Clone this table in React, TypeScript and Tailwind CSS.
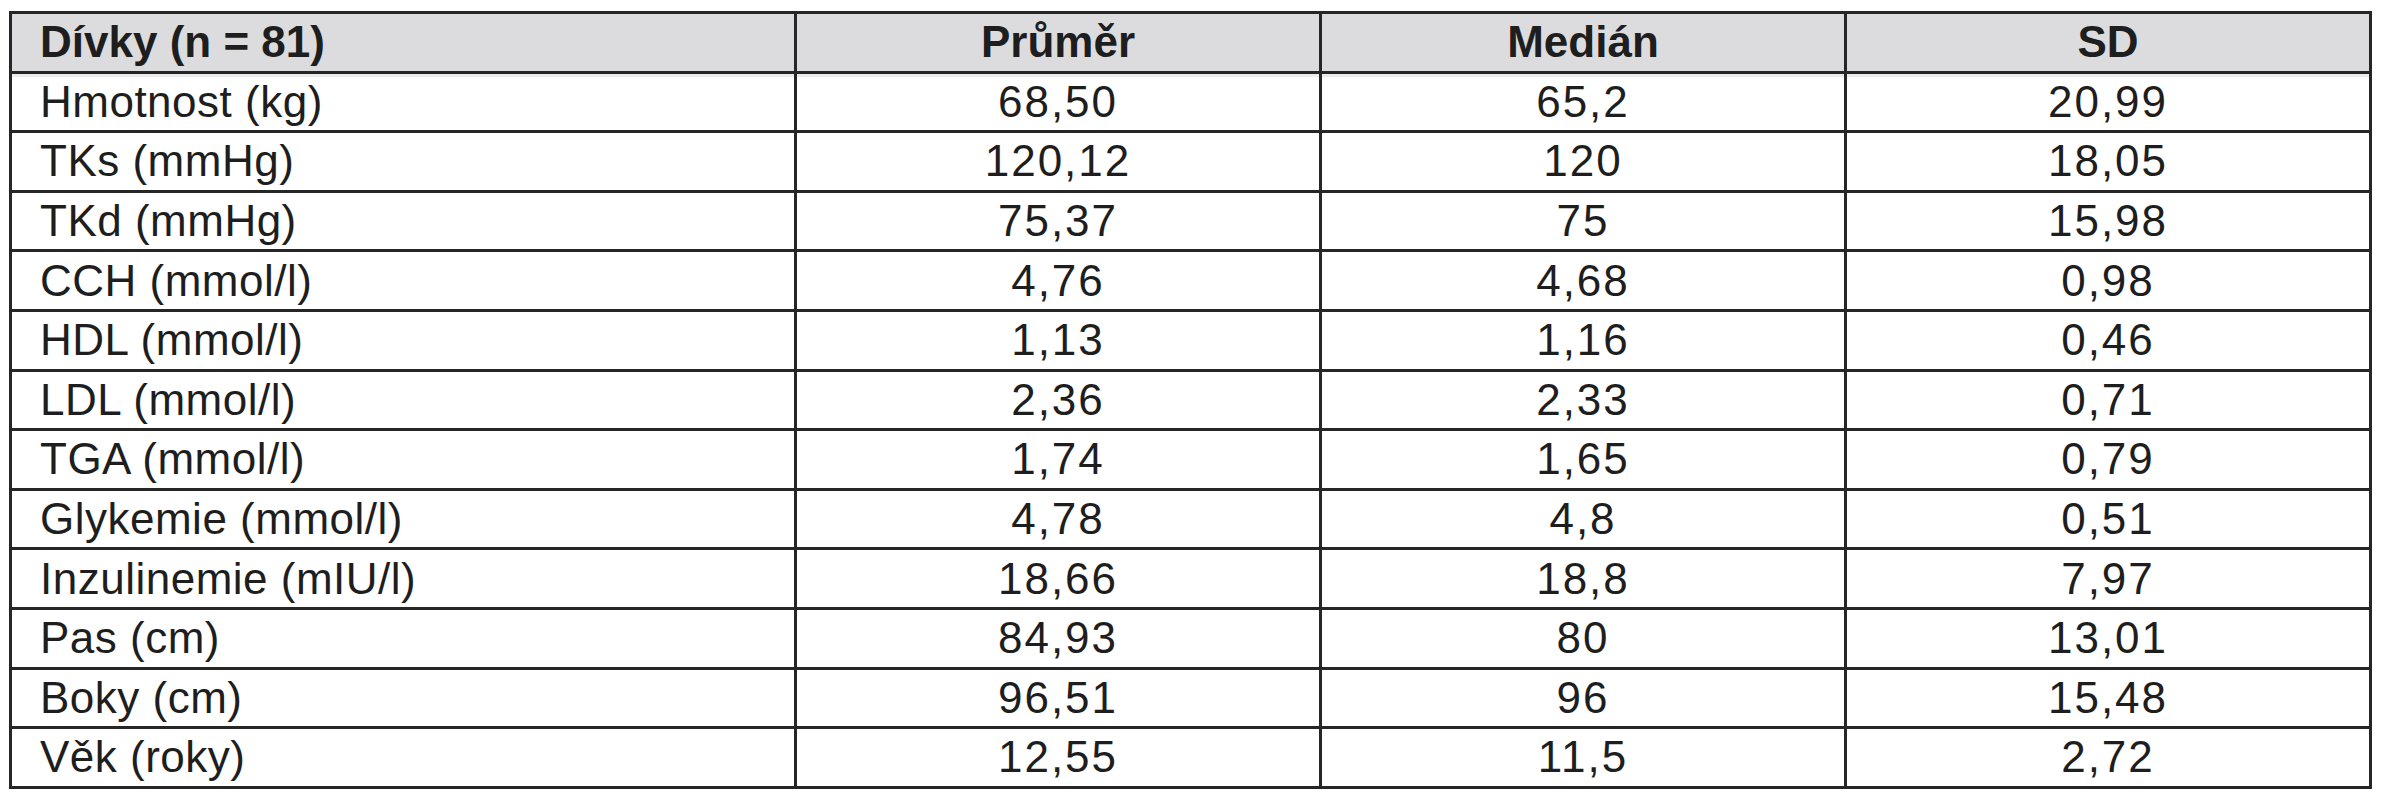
import React from "react";

type Row = { label: string; mean: string; median: string; sd: string };

const rows: Row[] = [
  { label: "Hmotnost (kg)", mean: "68,50", median: "65,2", sd: "20,99" },
  { label: "TKs (mmHg)", mean: "120,12", median: "120", sd: "18,05" },
  { label: "TKd (mmHg)", mean: "75,37", median: "75", sd: "15,98" },
  { label: "CCH (mmol/l)", mean: "4,76", median: "4,68", sd: "0,98" },
  { label: "HDL (mmol/l)", mean: "1,13", median: "1,16", sd: "0,46" },
  { label: "LDL (mmol/l)", mean: "2,36", median: "2,33", sd: "0,71" },
  { label: "TGA (mmol/l)", mean: "1,74", median: "1,65", sd: "0,79" },
  { label: "Glykemie (mmol/l)", mean: "4,78", median: "4,8", sd: "0,51" },
  { label: "Inzulinemie (mIU/l)", mean: "18,66", median: "18,8", sd: "7,97" },
  { label: "Pas (cm)", mean: "84,93", median: "80", sd: "13,01" },
  { label: "Boky (cm)", mean: "96,51", median: "96", sd: "15,48" },
  { label: "Věk (roky)", mean: "12,55", median: "11,5", sd: "2,72" },
];

export default function App() {
  return (
    <div className="w-[2384px] h-[800px] bg-white pt-[11px] pl-[9px] font-['Liberation_Sans',Arial,sans-serif] text-[#1e1e1e]">
      <table className="border-collapse border-[3px] border-[#262626] w-[2360px] table-fixed text-[44px] leading-none">
        <colgroup>
          <col className="w-[785px]" />
          <col className="w-[525px]" />
          <col className="w-[525px]" />
          <col className="w-[525px]" />
        </colgroup>
        <thead>
          <tr className="h-[59.6px] bg-[#dcdcdf]">
            <th className="border-[3px] border-[#262626] text-left pl-[28px] font-bold">Dívky (n = 81)</th>
            <th className="border-[3px] border-[#262626] text-center font-bold">Průměr</th>
            <th className="border-[3px] border-[#262626] text-center font-bold">Medián</th>
            <th className="border-[3px] border-[#262626] text-center font-bold">SD</th>
          </tr>
        </thead>
        <tbody>
          {rows.map((r, i) => (
            <tr key={r.label} className={`h-[59.6px] ${i === 0 ? "shadow-[inset_0_5px_0_#ececec]" : ""}`}>
              <td className="border-[3px] border-[#262626] pl-[28px] tracking-[0.5px]">{r.label}</td>
              <td className="border-[3px] border-[#262626] text-center tracking-[2px]">{r.mean}</td>
              <td className="border-[3px] border-[#262626] text-center tracking-[2px]">{r.median}</td>
              <td className="border-[3px] border-[#262626] text-center tracking-[2px]">{r.sd}</td>
            </tr>
          ))}
        </tbody>
      </table>
    </div>
  );
}
